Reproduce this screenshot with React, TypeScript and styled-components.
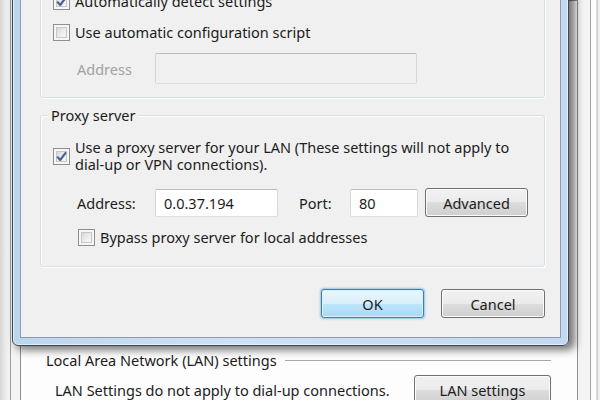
import React from 'react';
import styled, { createGlobalStyle } from 'styled-components';

const GlobalStyle = createGlobalStyle`
  html, body {
    margin: 0;
    padding: 0;
    width: 600px;
    height: 400px;
    overflow: hidden;
  }
  body {
    font-family: 'Noto Sans', 'Open Sans', sans-serif;
    font-size: 14.5px;
    color: #1c1c1c;
  }
`;

const Desktop = styled.div`
  position: relative;
  width: 600px;
  height: 400px;
  overflow: hidden;
  background: linear-gradient(
    to right,
    #d6d6d6 0,
    #ededed 6px,
    #f4f4f4 10px,
    #fafafa 591px,
    #ffffff 596px,
    #b4b4b4 597px,
    #eeeeee 598px
  );
`;

/* Internet Options window sitting behind the dialog */
const BackWindow = styled.div`
  position: absolute;
  left: 10px;
  top: 0;
  width: 581px;
  height: 440px;
  box-sizing: border-box;
  border-left: 1px solid #9c9c9c;
  border-right: 1px solid #a4a4a4;
  background: #f4f4f4;
  padding-left: 9px;
`;

const TabPage = styled.div`
  width: 558px;
  height: 100%;
  box-sizing: border-box;
  border: 1px solid #8e9096;
  background: #fdfdfd;
  padding-top: 350px;
`;

const SectionHeader = styled.div`
  display: flex;
  align-items: center;
  height: 18px;
  padding: 0 26px 0 25px;
`;

const SectionLine = styled.div`
  flex: 1;
  margin-left: 8px;
  height: 1px;
  background: #a8a8a8;
  box-shadow: 0 1px 0 #ffffff;
`;

const SectionRow = styled.div`
  display: flex;
  align-items: center;
  justify-content: space-between;
  margin-top: 6px;
  padding: 0 26px 0 34px;
`;

/* LAN settings dialog */
const DialogFrame = styled.div`
  position: absolute;
  left: 12px;
  top: -40px;
  width: 557px;
  height: 386px;
  box-sizing: border-box;
  padding: 7px;
  border: 1px solid #3a4756;
  border-radius: 6px;
  background: linear-gradient(to right, #bcd5ee, #cfe1f4 40%, #c2d9f1);
  box-shadow: 5px 3px 9px 1px rgba(0, 0, 0, 0.55), inset 0 0 0 1px rgba(255, 255, 255, 0.55);
`;

const DialogBody = styled.div`
  height: 100%;
  box-sizing: border-box;
  border: 1px solid #8b9db3;
  background: #f0f0f0;
  padding: 13px 15px 0 19px;
  display: flex;
  flex-direction: column;
`;

const GroupBox = styled.div<{ $mt?: number }>`
  position: relative;
  margin-top: ${({ $mt }) => $mt ?? 0}px;
  border: 1px solid #d5dfe5;
  border-radius: 3px;
  box-shadow: inset 1px 1px 0 #ffffff, 1px 1px 0 #ffffff;
  display: flex;
  flex-direction: column;
`;

const GroupLegend = styled.span`
  position: absolute;
  left: 7px;
  top: -10px;
  padding: 0 3px;
  line-height: 18px;
  background: #f0f0f0;
`;

const AutoGroup = styled(GroupBox)`
  padding: 10px 12px 13px 12px;
`;

const ProxyGroup = styled(GroupBox)`
  padding: 23px 12px 20px 12px;
`;

const CheckRow = styled.div<{ $mt?: number; $indent?: number }>`
  display: flex;
  align-items: center;
  gap: 5px;
  margin-top: ${({ $mt }) => $mt ?? 0}px;
  padding-left: ${({ $indent }) => $indent ?? 0}px;
  line-height: 17px;
`;

const Box = styled.span<{ $checked?: boolean }>`
  flex: none;
  width: 17px;
  height: 17px;
  box-sizing: border-box;
  border: 1px solid #8e8f8f;
  background: #f4f4f4;
  box-shadow: inset 0 0 0 2px #f6f6f6, inset 0 0 0 3px #c7c7c7;
  background-image: linear-gradient(135deg, #cbcbcb 0%, #f1f1f1 60%, #fbfbfb 100%);
  display: flex;
  align-items: center;
  justify-content: center;
`;

const FieldRow = styled.div<{ $mt?: number }>`
  display: flex;
  align-items: center;
  margin-top: ${({ $mt }) => $mt ?? 0}px;
  padding-left: 24px;
`;

const FieldLabel = styled.span<{ $width: number; $disabled?: boolean }>`
  width: ${({ $width }) => $width}px;
  flex: none;
  color: ${({ $disabled }) => ($disabled ? '#a2a2a2' : 'inherit')};
`;

const TextBox = styled.div<{ $width: number; $height: number; $disabled?: boolean }>`
  width: ${({ $width }) => $width}px;
  height: ${({ $height }) => $height}px;
  box-sizing: border-box;
  flex: none;
  border: 1px solid;
  border-color: #b8bcc3 #d4d7dc #dcdfe3 #d4d7dc;
  border-radius: 2px;
  background: ${({ $disabled }) => ($disabled ? '#f0f0f0' : '#ffffff')};
  padding: 0 8px;
  display: flex;
  align-items: center;
`;

const Button = styled.button<{ $width: number; $height?: number; $default?: boolean }>`
  width: ${({ $width }) => $width}px;
  height: ${({ $height }) => $height ?? 29}px;
  flex: none;
  box-sizing: border-box;
  font-family: inherit;
  font-size: 14.5px;
  color: #1c1c1c;
  padding: 0;
  border-radius: 3px;
  border: 1px solid ${({ $default }) => ($default ? '#3c7fb1' : '#707070')};
  background: ${({ $default }) =>
    $default
      ? 'linear-gradient(#eaf6fd 0%, #d9f0fc 50%, #bee6fd 50%, #a7d9f5 100%)'
      : 'linear-gradient(#f2f2f2 0%, #ebebeb 50%, #dddddd 50%, #cfcfcf 100%)'};
  box-shadow: ${({ $default }) =>
    $default
      ? 'inset 0 0 0 1px #dcf0fb, 0 0 2px 1px rgba(80, 170, 220, 0.6)'
      : 'inset 0 0 0 1px #fcfcfc'};
`;

const ButtonRow = styled.div`
  display: flex;
  justify-content: flex-end;
  gap: 17px;
  margin-top: 22px;
`;

const Check: React.FC = () => (
  <svg width="13" height="13" viewBox="0 0 13 13">
    <path d="M2.2 6.6 L5.2 10 L11 2.4" fill="none" stroke="#4a5f97" strokeWidth="2.1" strokeLinejoin="round" />
  </svg>
);

const Checkbox: React.FC<{ checked?: boolean }> = ({ checked }) => (
  <Box $checked={checked}>{checked && <Check />}</Box>
);

export default function App() {
  return (
    <>
      <GlobalStyle />
      <Desktop>
        <BackWindow>
          <TabPage>
            <SectionHeader>
              <span>Local Area Network (LAN) settings</span>
              <SectionLine />
            </SectionHeader>
            <SectionRow>
              <span>LAN Settings do not apply to dial-up connections.</span>
              <Button $width={137} $height={30}>LAN settings</Button>
            </SectionRow>
          </TabPage>
        </BackWindow>

        <DialogFrame>
          <DialogBody>
            <AutoGroup>
              <GroupLegend>Automatic configuration</GroupLegend>
              <CheckRow>
                <Checkbox checked />
                <span>Automatically detect settings</span>
              </CheckRow>
              <CheckRow $mt={14}>
                <Checkbox />
                <span>Use automatic configuration script</span>
              </CheckRow>
              <FieldRow $mt={12}>
                <FieldLabel $width={78} $disabled>Address</FieldLabel>
                <TextBox $width={262} $height={31} $disabled />
              </FieldRow>
            </AutoGroup>

            <ProxyGroup $mt={17}>
              <GroupLegend>Proxy server</GroupLegend>
              <CheckRow>
                <Checkbox checked />
                <span>
                  Use a proxy server for your LAN (These settings will not apply to
                  <br />
                  dial-up or VPN connections).
                </span>
              </CheckRow>
              <FieldRow $mt={15}>
                <FieldLabel $width={78}>Address:</FieldLabel>
                <TextBox $width={123} $height={28}>0.0.37.194</TextBox>
                <FieldLabel $width={51} style={{ marginLeft: 21 }}>Port:</FieldLabel>
                <TextBox $width={68} $height={28}>80</TextBox>
                <Button $width={103} $height={29} style={{ marginLeft: 7 }}>Advanced</Button>
              </FieldRow>
              <CheckRow $mt={12} $indent={25}>
                <Checkbox />
                <span>Bypass proxy server for local addresses</span>
              </CheckRow>
            </ProxyGroup>

            <ButtonRow>
              <Button $width={103} $default>OK</Button>
              <Button $width={104}>Cancel</Button>
            </ButtonRow>
          </DialogBody>
        </DialogFrame>
      </Desktop>
    </>
  );
}
